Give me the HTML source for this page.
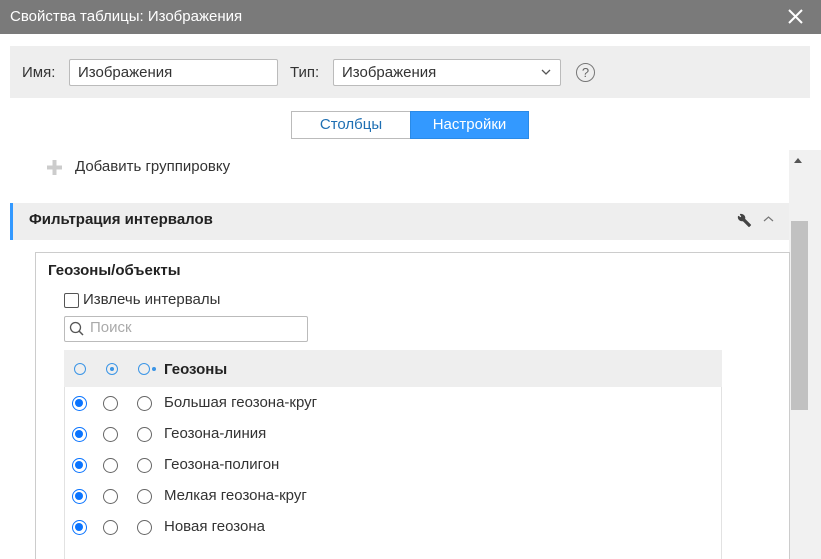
<!DOCTYPE html>
<html><head><meta charset="utf-8"><style>
*{box-sizing:border-box;margin:0;padding:0}
html,body{width:821px;height:559px;overflow:hidden}
body{background:#fff;font-family:"Liberation Sans",sans-serif;font-size:15px;color:#333;position:relative}
.a{position:absolute}
.r{position:absolute;width:15px;height:15px;border-radius:50%;border:1px solid #666;background:#fff}
.r.on{border:1.5px solid #0a74ff}
.r.on::after{content:"";position:absolute;left:2px;top:2px;width:8px;height:8px;border-radius:50%;background:#0a74ff}
.rb{position:absolute;width:12px;height:12px;border-radius:50%;border:1px solid #3b95e6}
.t{position:absolute;left:164px;font-size:15px;color:#333}
</style></head><body>
<div class="a" style="left:0;top:0;width:821px;height:34px;background:#7a7a7a"></div>
<div class="a" style="left:10px;top:8px;color:#fff;font-size:15px">Свойства таблицы: Изображения</div>
<svg class="a" style="left:788px;top:9px" width="15" height="15"><path d="M1 1L14 14M14 1L1 14" stroke="#fff" stroke-width="2"/></svg>
<div class="a" style="left:10px;top:46px;width:800px;height:52px;background:#eee"></div>
<div class="a" style="left:22px;top:64px">Имя:</div>
<div class="a" style="left:69px;top:59px;width:209px;height:27px;background:#fff;border:1px solid #bbb;border-radius:2px;padding:4px 8px">Изображения</div>
<div class="a" style="left:290px;top:64px">Тип:</div>
<div class="a" style="left:333px;top:59px;width:228px;height:27px;background:#fff;border:1px solid #bbb;border-radius:2px;padding:4px 8px">Изображения</div>
<svg class="a" style="left:541px;top:68px" width="10" height="8"><path d="M1 2L5 6L9 2" stroke="#555" fill="none" stroke-width="1.3"/></svg>
<div class="a" style="left:576px;top:63px;width:19px;height:19px;border:1px solid #777;border-radius:50%;text-align:center;font-size:13px;line-height:17px;color:#666">?</div>
<div class="a" style="left:291px;top:111px;width:120px;height:28px;border:1px solid #bbb;color:#1e6fb3;text-align:center;line-height:26px">Столбцы</div>
<div class="a" style="left:410px;top:111px;width:119px;height:28px;background:#3399ff;border:1px solid #2a8ae6;color:#fff;text-align:center;line-height:26px">Настройки</div>
<svg class="a" style="left:46px;top:159px" width="17" height="17"><path d="M8.5 1V16M1 8.5H16" stroke="#ccc" stroke-width="4"/></svg>
<div class="a" style="left:75px;top:158px">Добавить группировку</div>
<div class="a" style="left:10px;top:203px;width:779px;height:37px;background:#eee;border-left:3px solid #3399ff"></div>
<div class="a" style="left:29px;top:211px;font-weight:bold;color:#222">Фильтрация интервалов</div>
<svg class="a" style="left:736px;top:212px" width="16" height="16"><path d="M2.5 4.5A3.5 3.5 0 0 0 7 8.5L13 14.5L14.5 13L8.5 7A3.5 3.5 0 0 0 4.5 2.5L6 4.5L4.5 6Z" fill="#444" stroke="#444" stroke-width="1.2" stroke-linejoin="round"/></svg>
<svg class="a" style="left:763px;top:215px" width="11" height="8"><path d="M1 6L5.5 2L10 6" stroke="#777" fill="none" stroke-width="1.2"/></svg>
<div class="a" style="left:789px;top:150px;width:32px;height:409px;background:#f1f1f1"></div>
<div class="a" style="left:791px;top:221px;width:17px;height:189px;background:#c1c1c1"></div>
<svg class="a" style="left:793px;top:156px" width="10" height="8"><path d="M1 7L5 2L9 7Z" fill="#555"/></svg>
<div class="a" style="left:35px;top:252px;width:755px;height:320px;border:1px solid #ccc"></div>
<div class="a" style="left:48px;top:262px;font-weight:bold;color:#222">Геозоны/объекты</div>
<div class="a" style="left:64px;top:293px;width:15px;height:15px;border:1px solid #555;border-radius:2px"></div>
<div class="a" style="left:83px;top:291px">Извлечь интервалы</div>
<div class="a" style="left:64px;top:316px;width:244px;height:26px;border:1px solid #bbb;border-radius:2px"></div>
<svg class="a" style="left:69px;top:321px" width="16" height="16"><circle cx="6.5" cy="6.5" r="5" stroke="#555" fill="none" stroke-width="1.3"/><path d="M10 10L14 14" stroke="#555" stroke-width="1.5"/></svg>
<div class="a" style="left:90px;top:319px;color:#aaa">Поиск</div>
<div class="a" style="left:64px;top:350px;width:658px;height:37px;background:#eee"></div>
<div class="a" style="left:64px;top:387px;width:658px;height:180px;border-left:1px solid #e2e2e2;border-right:1px solid #e2e2e2"></div>
<div class="rb" style="left:74px;top:363px"></div>
<div class="rb" style="left:106px;top:363px"><div style="position:absolute;left:3px;top:3px;width:4px;height:4px;border-radius:50%;background:#3b95e6"></div></div>
<div class="rb" style="left:138px;top:363px"></div>
<div class="a" style="left:152px;top:367px;width:4px;height:4px;border-radius:50%;background:#3b95e6"></div>
<div class="t" style="top:361px;font-weight:bold;color:#222">Геозоны</div>
<div class="r on" style="left:72px;top:396px"></div><div class="r" style="left:103px;top:396px"></div><div class="r" style="left:137px;top:396px"></div><div class="t" style="top:394px">Большая геозона-круг</div>
<div class="r on" style="left:72px;top:427px"></div><div class="r" style="left:103px;top:427px"></div><div class="r" style="left:137px;top:427px"></div><div class="t" style="top:425px">Геозона-линия</div>
<div class="r on" style="left:72px;top:458px"></div><div class="r" style="left:103px;top:458px"></div><div class="r" style="left:137px;top:458px"></div><div class="t" style="top:456px">Геозона-полигон</div>
<div class="r on" style="left:72px;top:489px"></div><div class="r" style="left:103px;top:489px"></div><div class="r" style="left:137px;top:489px"></div><div class="t" style="top:487px">Мелкая геозона-круг</div>
<div class="r on" style="left:72px;top:520px"></div><div class="r" style="left:103px;top:520px"></div><div class="r" style="left:137px;top:520px"></div><div class="t" style="top:518px">Новая геозона</div>
</body></html>
